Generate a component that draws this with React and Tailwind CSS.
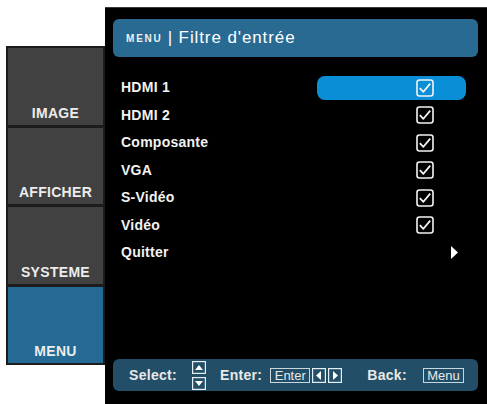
const font = "font-['Liberation_Sans',Arial,sans-serif]";

const sideItems = [
  { label: "IMAGE", active: false },
  { label: "AFFICHER", active: false },
  { label: "SYSTEME", active: false },
  { label: "MENU", active: true },
];

const rows = [
  { label: "HDMI 1", type: "check", selected: true },
  { label: "HDMI 2", type: "check" },
  { label: "Composante", type: "check" },
  { label: "VGA", type: "check" },
  { label: "S-Vidéo", type: "check" },
  { label: "Vidéo", type: "check" },
  { label: "Quitter", type: "arrow" },
];

function CheckBox() {
  return (
    <svg width="18" height="18" viewBox="0 0 18 18">
      <rect x="1" y="1" width="16" height="16" rx="2.5" fill="none" stroke="#f4f4f4" strokeWidth="1.6" />
      <path d="M3.8 9.2 L7.4 12.8 L14.2 4.6" fill="none" stroke="#f4f4f4" strokeWidth="1.8" strokeLinejoin="round" />
    </svg>
  );
}

function KeyArrow({ dir }) {
  const pts = {
    up: "3,9 7,4 11,9",
    down: "3,4 7,9 11,4",
    left: "9,3 4,7.5 9,12",
    right: "5,3 10,7.5 5,12",
  }[dir];
  const vertical = dir === "up" || dir === "down";
  return (
    <svg width="14" height={vertical ? 13 : 15} viewBox={vertical ? "0 0 14 13" : "0 0 14 15"}>
      <rect x="0.6" y="0.6" width="12.8" height={vertical ? 11.8 : 13.8} fill="none" stroke="#e6eef2" strokeWidth="1.2" />
      <polygon points={pts} fill="#ffffff" />
    </svg>
  );
}

export default function App() {
  return (
    <div className={`flex h-[404px] w-[487px] overflow-hidden bg-white ${font}`}>
      {/* side tabs */}
      <div className="ml-[6px] mt-[46px] flex h-[319px] w-[99px] flex-col gap-[3px] bg-[#1c1c1c] p-[2px]">
        {sideItems.map((item) => (
          <div
            key={item.label}
            className={`flex flex-1 items-end justify-center pb-[4px] text-[14px] font-bold leading-[16px] tracking-[0.3px] text-[#ececec] ${
              item.active ? "bg-[#246a94]" : "bg-[#414141]"
            }`}
          >
            {item.label}
          </div>
        ))}
      </div>

      {/* main panel */}
      <div className="mt-[7px] flex h-[397px] flex-1 flex-col border-t border-[#3a3a3a] bg-black pl-[8px] pr-[9px]">
        <div className="mt-[11px] flex h-[38px] items-center rounded-[6px] bg-[#296a93] pl-[13px] text-white">
          <span className="text-[10px] font-bold tracking-[1.8px] text-[#f0f0f0]">MENU</span>
          <span className="ml-[5px] text-[17px] tracking-[0.9px]">| Filtre d'entrée</span>
        </div>

        <div className="mt-[17px] -mr-[9px] flex flex-col">
          {rows.map((row) => (
            <div key={row.label} className="flex h-[27.5px] items-center">
              <div className="flex-1 pl-[8px] text-[14px] font-bold tracking-[0.25px] text-[#f2f2f2]">
                {row.label}
              </div>
              <div
                className={`mr-[21px] flex h-[24px] w-[149px] items-center justify-end rounded-[8px] ${
                  row.selected ? "bg-[#0a8ed6]" : ""
                } ${row.type === "check" ? "pr-[32px]" : "pr-[8px]"}`}
              >
                {row.type === "check" ? (
                  <CheckBox />
                ) : (
                  <svg width="7" height="13" viewBox="0 0 7 13">
                    <polygon points="0,0 7,6.5 0,13" fill="#ffffff" />
                  </svg>
                )}
              </div>
            </div>
          ))}
        </div>

        <div className="flex-1" />

        <div className="mb-[13px] flex h-[32px] items-center rounded-[6px] bg-[#234e67] pl-[16px] text-[14px] font-bold tracking-[0.3px] text-[#e8e8e8]">
          <span>Select:</span>
          <div className="ml-[15px] flex flex-col gap-[3px]">
            <KeyArrow dir="up" />
            <KeyArrow dir="down" />
          </div>
          <span className="ml-[14px]">Enter:</span>
          <span className="ml-[8px] flex h-[15px] w-[40px] items-center justify-center border border-[#c9d6dd] text-[13px] font-normal leading-none tracking-normal">
            Enter
          </span>
          <div className="ml-[2px]">
            <KeyArrow dir="left" />
          </div>
          <div className="ml-[2px]">
            <KeyArrow dir="right" />
          </div>
          <span className="ml-[25px]">Back:</span>
          <span className="ml-[16px] flex h-[15px] w-[41px] items-center justify-center border border-[#c9d6dd] text-[13px] font-normal leading-none tracking-normal">
            Menu
          </span>
        </div>
      </div>
    </div>
  );
}
